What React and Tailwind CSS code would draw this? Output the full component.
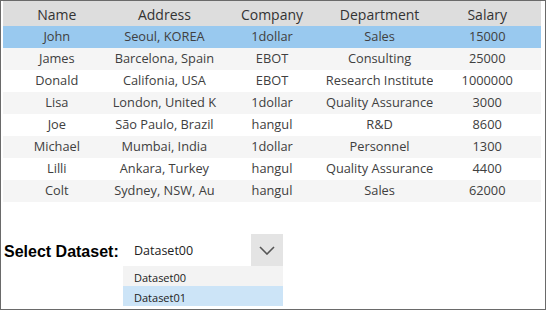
import React from "react";

const rows = [
  ["John", "Seoul, KOREA", "1dollar", "Sales", "15000"],
  ["James", "Barcelona, Spain", "EBOT", "Consulting", "25000"],
  ["Donald", "Califonia, USA", "EBOT", "Research Institute", "1000000"],
  ["Lisa", "London, United K", "1dollar", "Quality Assurance", "3000"],
  ["Joe", "São Paulo, Brazil", "hangul", "R&D", "8600"],
  ["Michael", "Mumbai, India", "1dollar", "Personnel", "1300"],
  ["Lilli", "Ankara, Turkey", "hangul", "Quality Assurance", "4400"],
  ["Colt", "Sydney, NSW, Au", "hangul", "Sales", "62000"],
];

const headers = ["Name", "Address", "Company", "Department", "Salary"];

export default function App() {
  return (
    <div className="w-[546px] h-[310px] border border-[#6a6a6a] bg-white overflow-hidden relative" style={{ fontFamily: "'Open Sans', 'Noto Sans', sans-serif" }}>
      <div className="ml-[2px] w-[538px]">
        <div className="grid grid-cols-5 h-[25px] bg-[#dddddd] text-[#333] text-[14px] items-center pt-[1px]">
          {headers.map((h) => (
            <div key={h} className="text-center whitespace-nowrap overflow-hidden">{h}</div>
          ))}
        </div>
        {rows.map((r, i) => (
          <div
            key={i}
            className={
              "grid grid-cols-5 h-[22px] items-center text-[12.8px] text-[#404040] " +
              (i === 0 ? "bg-[#99c9ef]" : i % 2 === 1 ? "bg-[#f5f5f5]" : "bg-white")
            }
          >
            {r.map((c, j) => (
              <div key={j} className="text-center whitespace-nowrap overflow-hidden">{c}</div>
            ))}
          </div>
        ))}
      </div>
      <div className="mt-[32px] flex items-center h-[32px]">
        <div className="w-[122px] pl-[3px] pt-[3px] text-[16px] font-bold text-black" style={{ fontFamily: "'Liberation Sans', Arial, sans-serif" }}>
          Select Dataset:
        </div>
        <div className="relative w-[160px] h-[32px] flex items-center">
          <div className="flex-1 pl-[11px] pt-[3px] text-[12.5px] text-[#222]">Dataset00</div>
          <div className="w-[32px] h-[32px] bg-[#e4e4e4] flex items-center justify-center">
            <svg width="16" height="9" viewBox="0 0 16 9" fill="none">
              <path d="M1 1 L8 8 L15 1" stroke="#555" strokeWidth="1.6" />
            </svg>
          </div>
          <div className="absolute left-0 top-[32px] w-[160px] text-[11px] text-[#222]">
            <div className="h-[20px] bg-[#f3f3f3] flex items-center pl-[11px] pt-[5px]">Dataset00</div>
            <div className="h-[20px] bg-[#cce4f7] flex items-center pl-[11px] pt-[5px]">Dataset01</div>
          </div>
        </div>
      </div>
    </div>
  );
}
